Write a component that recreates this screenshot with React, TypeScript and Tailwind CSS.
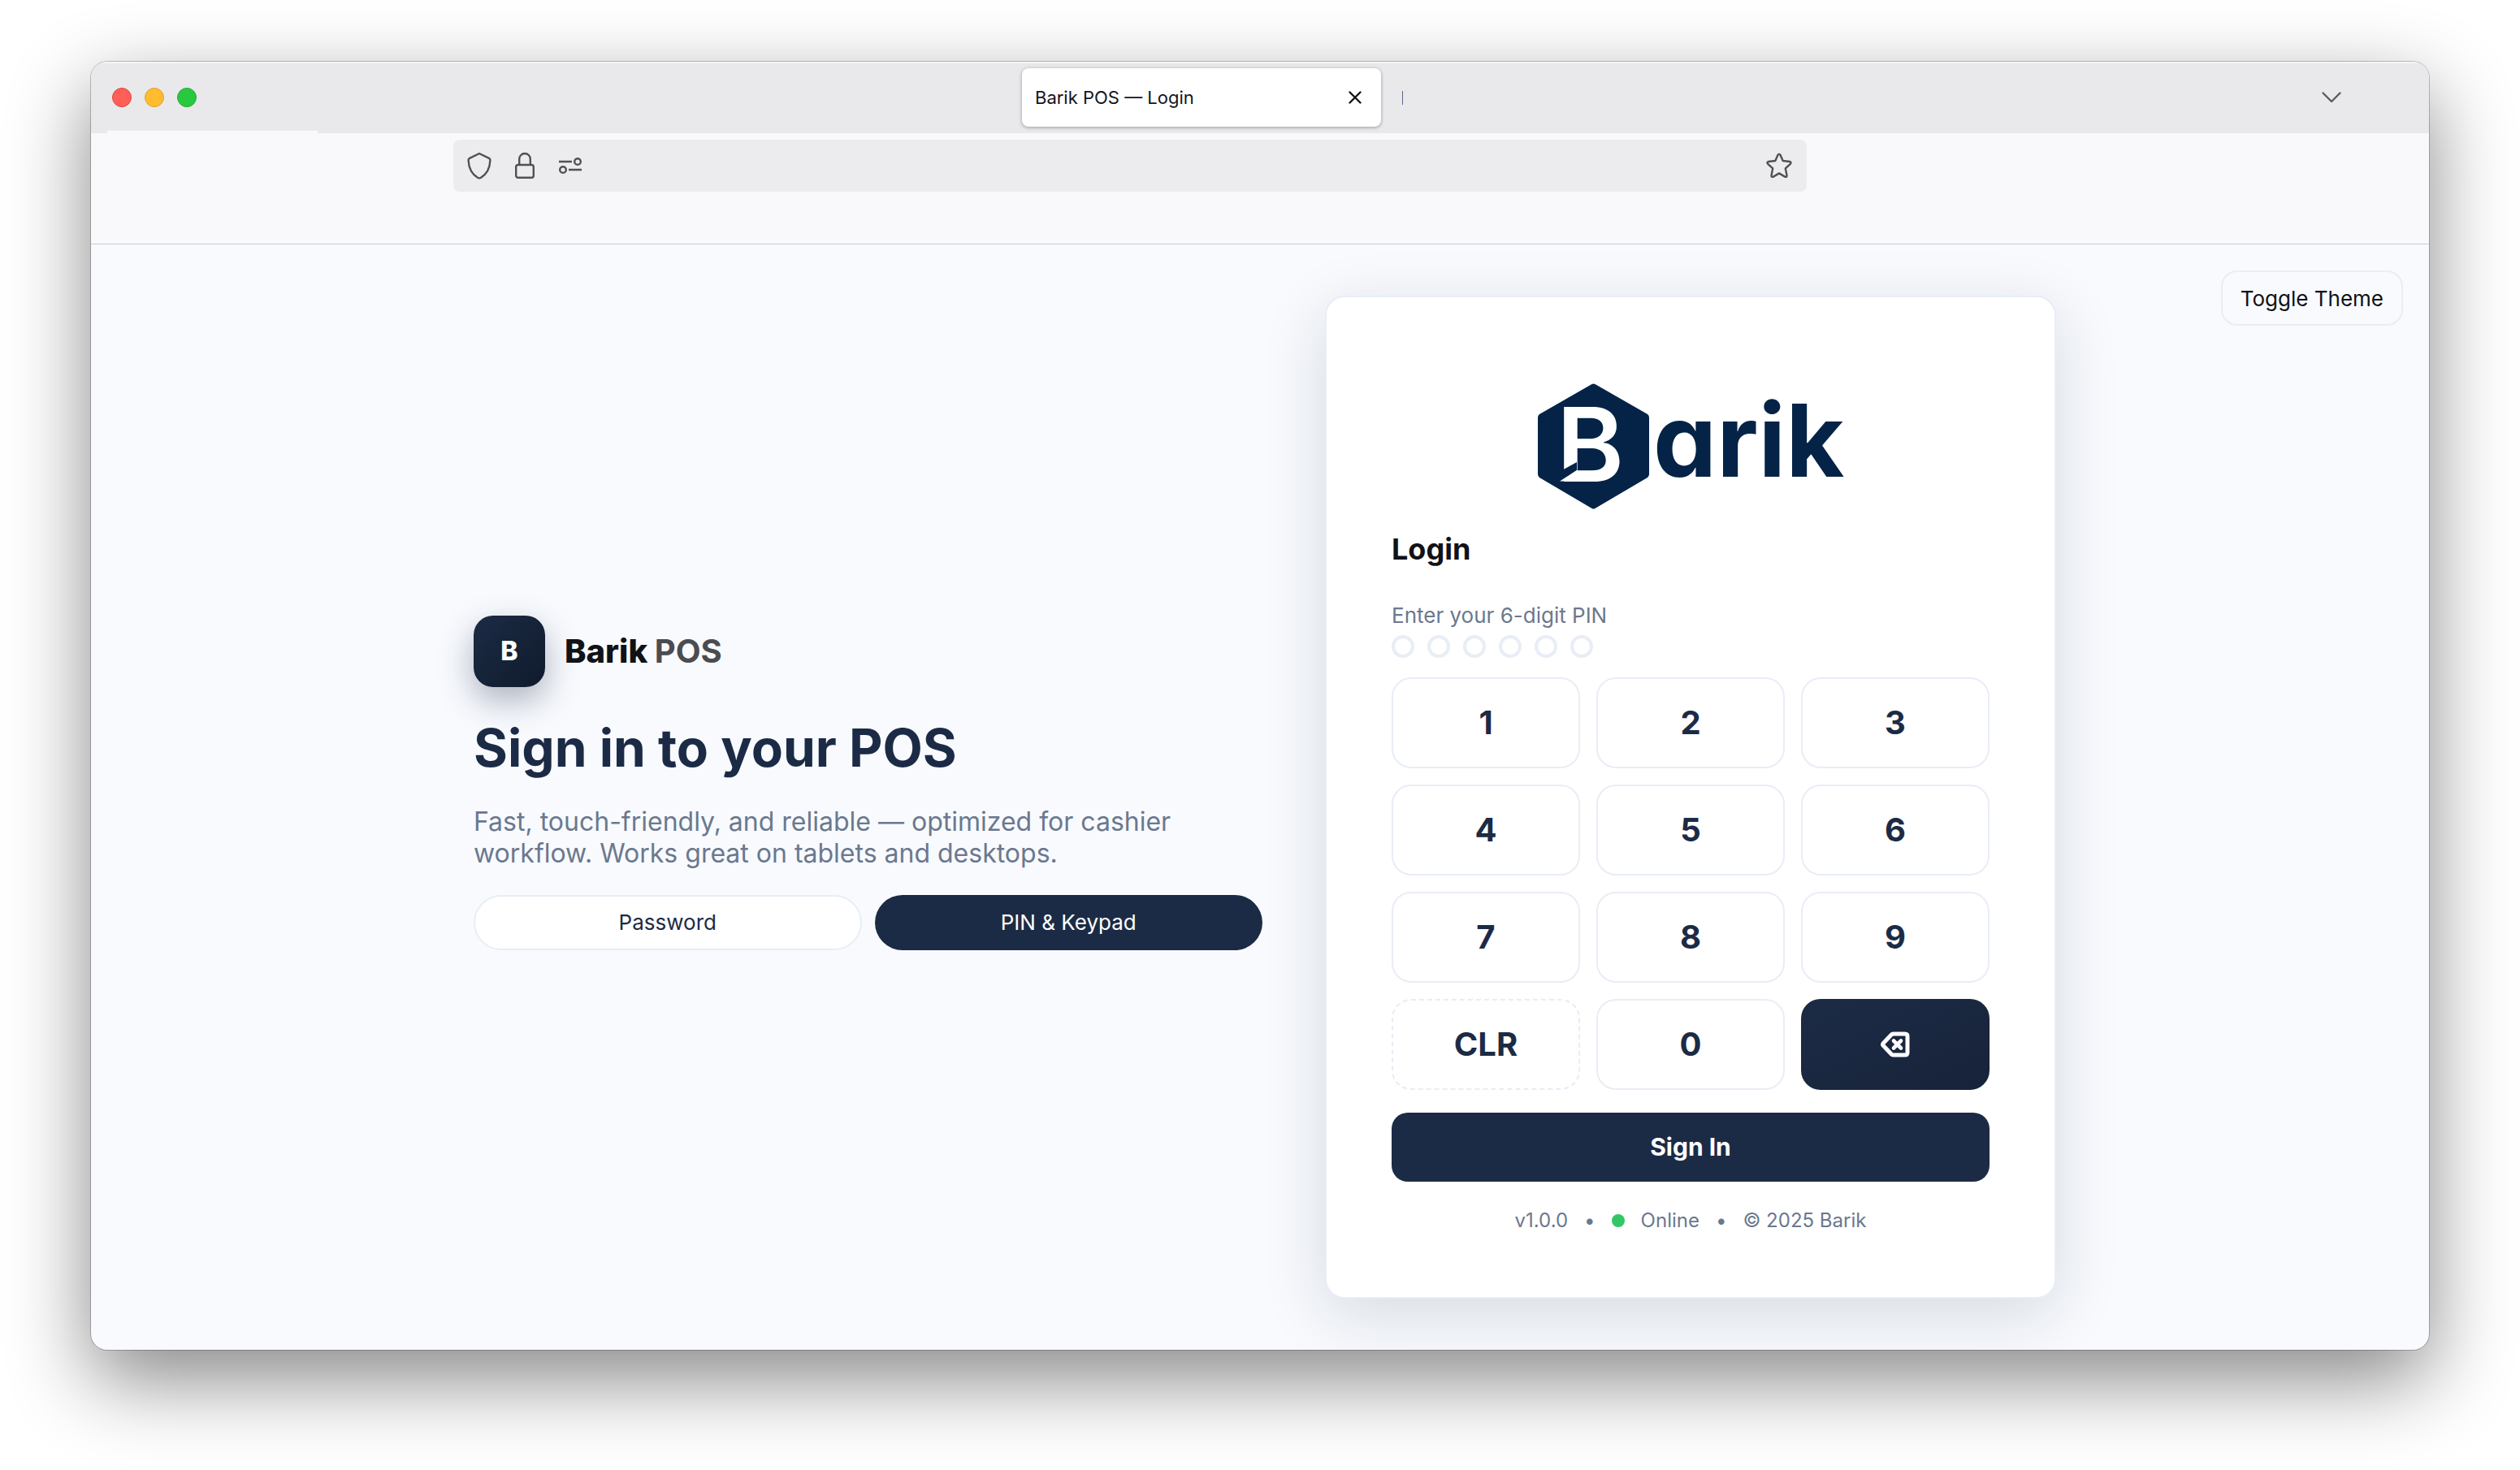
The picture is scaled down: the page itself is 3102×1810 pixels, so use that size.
import React from "react";

const keys = ["1", "2", "3", "4", "5", "6", "7", "8", "9"];

function ShieldIcon() {
  return (
    <svg width="32" height="36" viewBox="0 0 32 36" fill="none" stroke="#515154" strokeWidth="2.4" strokeLinejoin="round">
      <path d="M16 3 L28.5 9.2 Q29.6 10 29.4 11.5 Q28.8 26 18 32.8 Q16 34 14 32.8 Q3.2 26 2.6 11.5 Q2.4 10 3.5 9.2 Z" />
    </svg>
  );
}

function LockIcon() {
  return (
    <svg width="32" height="36" viewBox="0 0 32 36" fill="none" stroke="#515154" strokeWidth="2.4">
      <rect x="5.2" y="17" width="21.6" height="15.8" rx="2.6" />
      <path d="M9.2 17 V9.8 A6.8 6.8 0 0 1 22.8 9.8 V17" />
    </svg>
  );
}

function SlidersIcon() {
  return (
    <svg width="32" height="36" viewBox="0 0 32 36" fill="none" stroke="#515154" strokeWidth="2.4">
      <path d="M2 13 H18 M14 23 H30" />
      <circle cx="25" cy="13" r="3.8" />
      <circle cx="7" cy="23" r="3.8" />
    </svg>
  );
}

function StarIcon() {
  return (
    <svg width="36" height="36" viewBox="0 0 36 36" fill="none" stroke="#515154" strokeWidth="2.4" strokeLinejoin="round">
      <path d="M16.6 4.6 Q18 2.6 19.4 4.6 L22.7 12 L31 13 Q33.6 13.6 31.8 15.8 L25.8 21.4 L27.5 30 Q27.6 32.6 25.2 31.6 L18 27.4 L10.8 31.6 Q8.4 32.6 8.5 30 L10.2 21.4 L4.2 15.8 Q2.4 13.6 5 13 L13.3 12 Z" />
    </svg>
  );
}

function BackspaceIcon() {
  return (
    <svg width="40" height="40" viewBox="0 0 40 40" fill="none" stroke="#fff" strokeWidth="5" strokeLinejoin="round" strokeLinecap="round">
      <path d="M17.5 7 H32 Q35 7 35 10 V30 Q35 33 32 33 H17.5 Q16 33 15 31.8 L5 21.2 Q4 20 5 18.8 L15 8.2 Q16 7 17.5 7 Z" />
      <path d="M18 15.5 L27 24.5 M27 15.5 L18 24.5" strokeWidth="4.6" />
    </svg>
  );
}

function BarikLogo() {
  return (
    <svg width="392" height="192" viewBox="-8 -16 392 192" role="img" aria-label="Barik" className="font-['Inter']">
      <path
        d="M66.5 3 Q68.500 1.800 70.500 3 L135 40 Q137 41.500 137 44 V114 Q137 116.500 135 118 L70.500 156 Q68.500 157.200 66.500 156 L2 118 Q0 116.500 0 114 V44 Q0 41.500 2 40 Z"
        fill="#042347"
      />
      <text x="23" y="122.500" fontSize="126" fontWeight="600" fill="#fff">B</text>
      <path d="M29 109.500 L48 99 V109 L27 123.500 Z" fill="#042347" />
      <path d="M27 122.500 L48 109 V122.500 Z" fill="#fff" />
      <text x="142" y="116.500" fontSize="124" fontWeight="700" fill="#042347" className="[font-feature-settings:'cv11']">arik</text>
    </svg>
  );
}

function TabBar() {
  return (
    <header className="relative grid h-[88px] grid-cols-[1146fr_442px_1290fr] items-center bg-[#e9e9eb] shadow-[inset_0_2px_0_#f6f6f7]">
      <div className="flex gap-4 pl-[26px]">
        <button aria-label="Close window" className="size-6 rounded-full border border-[#e2463f] bg-[#ff5f57]" />
        <button aria-label="Minimize window" className="size-6 rounded-full border border-[#e0a033] bg-[#febc2e]" />
        <button aria-label="Zoom window" className="size-6 rounded-full border border-[#27aa35] bg-[#28c840]" />
      </div>
      <div className="flex h-[72px] items-center justify-between rounded-lg bg-white pr-6 pl-4 shadow-[0_1px_4px_rgba(0,0,0,0.35)]">
        <span className="text-[22px] text-[#15141a]">Barik POS — Login</span>
        <button aria-label="Close tab" className="text-[#15141a]">
          <svg width="16" height="16" viewBox="0 0 16 16" stroke="currentColor" strokeWidth="2.4" strokeLinecap="round">
            <path d="M1.500 1.500 L14.500 14.500 M14.500 1.500 L1.500 14.500" />
          </svg>
        </button>
      </div>
      <div className="flex items-center justify-between pr-[108px] pl-[26px]">
        <span className="h-[17px] w-px bg-[#5b6685]" />
        <button aria-label="List all tabs">
          <svg width="24" height="14" viewBox="0 0 24 14" fill="none" stroke="#5b5b66" strokeWidth="2.400" strokeLinecap="round" strokeLinejoin="round">
            <path d="M1.500 1.500 L12 12 L22.500 1.500" />
          </svg>
        </button>
      </div>
      <span className="absolute bottom-0 left-5 h-[3px] w-[259px] bg-[#f9f9fb]" />
    </header>
  );
}

function Toolbar() {
  return (
    <div className="flex h-[137px] items-start justify-center border-b border-[#cccccf] bg-[#f9f9fb] px-40 pt-2">
      <div className="mr-80 flex h-16 w-full max-w-[1666px] items-center rounded-lg bg-[#ececee] px-4">
        <div className="flex items-center gap-6">
          <ShieldIcon />
          <LockIcon />
          <SlidersIcon />
        </div>
        <input aria-label="Address" className="mx-4 h-full min-w-0 flex-1 bg-transparent text-[26px] outline-none" />
        <button aria-label="Bookmark this page"><StarIcon /></button>
      </div>
    </div>
  );
}

function Intro() {
  return (
    <section className="pb-9">
      <div className="flex items-center gap-6">
        <div className="flex size-[88px] items-center justify-center rounded-3xl bg-linear-to-br from-[#1c2b45] to-[#0f1b2c] text-[32px] font-extrabold text-white shadow-[0_16px_40px_rgba(28,43,69,0.35)]">
          B
        </div>
        <p className="text-[40px] font-extrabold text-[#111216]">
          Barik <span className="font-bold text-[#4b4c50]">POS</span>
        </p>
      </div>
      <h1 className="mt-9 text-[64px] leading-[78px] font-bold text-[#1c2b45]">Sign in to your POS</h1>
      <p className="mt-8 text-[32px] leading-[39px] text-[#6b788e]">
        Fast, touch-friendly, and reliable — optimized for cashier workflow. Works great on tablets and desktops.
      </p>
      <div className="mt-8 grid grid-cols-2 gap-4 text-[26px]">
        <button className="h-[68px] rounded-full border-2 border-[#e8edf6] bg-white text-[#1c2b45]">Password</button>
        <button className="h-[68px] rounded-full bg-[#1c2b45] text-white">PIN &amp; Keypad</button>
      </div>
    </section>
  );
}

function LoginCard() {
  return (
    <section className="flex flex-col rounded-3xl border-2 border-[#e8edf6] bg-white px-20 pt-[88px] pb-[78px] shadow-[0_20px_80px_rgba(15,30,40,0.14)]">
      <div className="flex justify-center">
        <BarikLogo />
      </div>
      <h2 className="mt-2 text-[36px] leading-[44px] font-bold text-[#111216]">Login</h2>
      <p className="mt-11 text-[26px] leading-8 text-[#6b788e]">Enter your 6-digit PIN</p>
      <div className="mt-2 flex gap-4">
        {[0, 1, 2, 3, 4, 5].map((i) => (
          <span key={i} className="size-7 rounded-full border-4 border-[#e8edf6]" />
        ))}
      </div>
      <div className="mt-6 grid grid-cols-3 gap-5 text-[40px] font-bold text-[#1c2b45]">
        {keys.map((k) => (
          <button key={k} className="h-28 rounded-3xl border-2 border-[#e8edf6] bg-white">{k}</button>
        ))}
        <button className="h-28 rounded-3xl border-2 border-dashed border-[#e8edf6] bg-white">CLR</button>
        <button className="h-28 rounded-3xl border-2 border-[#e8edf6] bg-white">0</button>
        <button aria-label="Delete digit" className="flex h-28 items-center justify-center rounded-3xl bg-linear-to-br from-[#1c2b45] to-[#17233a]">
          <BackspaceIcon />
        </button>
      </div>
      <button className="mt-7 h-[85px] rounded-[20px] bg-[#1c2b45] text-[30px] font-bold text-white">Sign In</button>
      <footer className="mt-8 flex items-center justify-center gap-5 text-2xl leading-8 text-[#6b788e]">
        <span>v1.0.0</span>
        <span>•</span>
        <span className="size-4 rounded-full bg-[#32c766]" />
        <span>Online</span>
        <span>•</span>
        <span>© 2025 Barik</span>
      </footer>
    </section>
  );
}

export default function App() {
  return (
    <div className="flex min-h-screen flex-col bg-white px-28 pt-[76px] pb-[148px] font-['Inter',sans-serif]">
      <div className="flex flex-1 flex-col overflow-hidden rounded-[20px] bg-[#f8fafe] shadow-[0_0_0_1px_rgba(0,0,0,0.22),0_36px_100px_rgba(0,0,0,0.48)]">
        <TabBar />
        <Toolbar />
        <main className="relative flex flex-1 items-center justify-center pl-3">
          <button className="absolute top-8 right-8 h-[68px] rounded-[20px] border-2 border-[#e8edf6] px-[22px] text-[26px] text-[#111216]">
            Toggle Theme
          </button>
          <div className="grid w-full max-w-[1948px] grid-cols-[971fr_900fr] items-center gap-[77px]">
            <Intro />
            <LoginCard />
          </div>
        </main>
      </div>
    </div>
  );
}
